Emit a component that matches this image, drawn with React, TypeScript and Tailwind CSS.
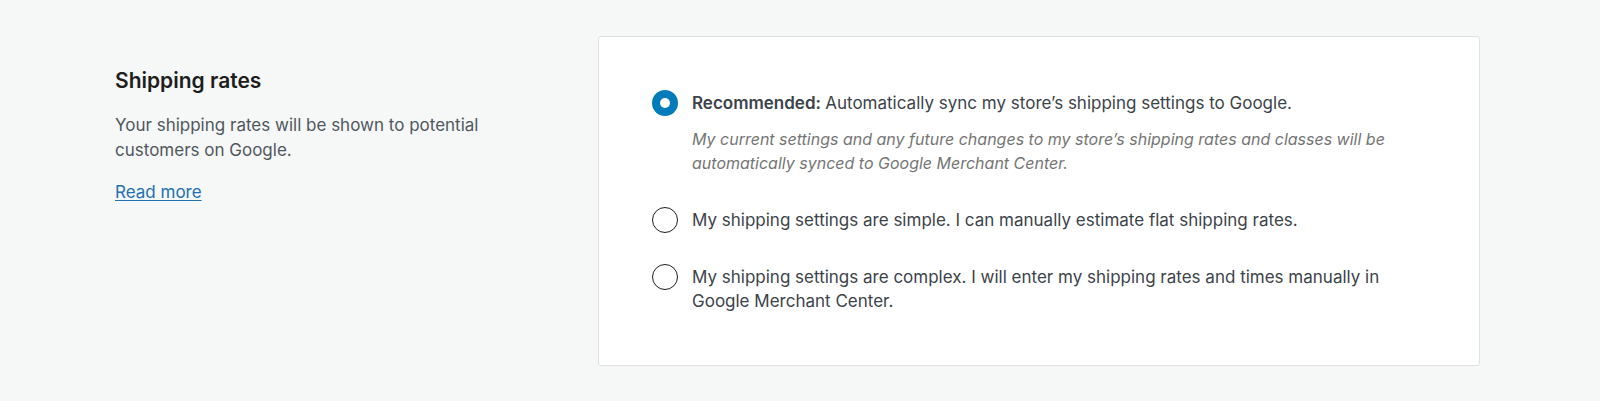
import React, { useState } from 'react';

const options = [
  {
    id: 'automatic',
    label: 'Automatically sync my store’s shipping settings to Google.',
    prefix: 'Recommended:',
    help: 'My current settings and any future changes to my store’s shipping rates and classes will be automatically synced to Google Merchant Center.',
  },
  {
    id: 'flat',
    label: 'My shipping settings are simple. I can manually estimate flat shipping rates.',
  },
  {
    id: 'manual',
    label: 'My shipping settings are complex. I will enter my shipping rates and times manually in Google Merchant Center.',
  },
];

const Radio = ({ checked }: { checked: boolean }) =>
  checked ? (
    <span className="flex h-[26px] w-[26px] shrink-0 items-center justify-center rounded-full bg-[#007cba]">
      <span className="h-[10px] w-[10px] rounded-full bg-white" />
    </span>
  ) : (
    <span className="h-[26px] w-[26px] shrink-0 rounded-full border-[1.5px] border-[#1e1e1e] bg-white" />
  );

export default function App() {
  const [selected, setSelected] = useState('automatic');

  return (
    <div className="min-h-[401px] bg-[#f6f7f7] font-['Inter',sans-serif] text-[#3c434a] antialiased">
      <div className="flex pl-[115px] pr-[120px] pt-[36px] pb-[35px]">
        <div className="w-[483px] shrink-0 pt-[31px] pr-[100px]">
          <h2 className="text-[21px] font-semibold leading-[28px] text-[#1e1e1e]">Shipping rates</h2>
          <p className="mt-[18px] text-[17px] leading-[25px] text-[#50575e]">
            Your shipping rates will be shown to potential customers on Google.
          </p>
          <a href="#" className="mt-[17px] inline-block text-[17px] leading-[25px] text-[#2271b1] underline underline-offset-2">
            Read more
          </a>
        </div>

        <div className="flex-1 rounded-[3px] border border-[#e0e0e0] bg-white px-[53px] pt-[54px] pb-[52px]">
          <div className="flex flex-col gap-[33px]">
            {options.map(opt => (
              <label key={opt.id} className="flex cursor-pointer gap-[14px]" onClick={() => setSelected(opt.id)}>
                <span className="flex h-[24px] items-center">
                  <Radio checked={selected === opt.id} />
                </span>
                <span className="max-w-[720px]">
                  <span className="block text-[17px] leading-[24px] text-[#3c434a]">
                    {opt.prefix && <strong className="font-semibold">{opt.prefix} </strong>}
                    {opt.label}
                  </span>
                  {opt.help && (
                    <span className="mt-[12px] block text-[16px] italic leading-[24px] text-[#757575]">{opt.help}</span>
                  )}
                </span>
              </label>
            ))}
          </div>
        </div>
      </div>
    </div>
  );
}
